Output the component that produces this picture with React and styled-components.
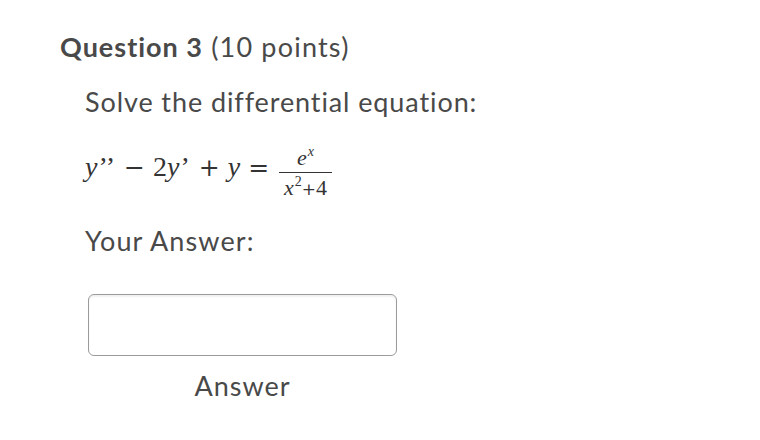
import React from "react";
import styled, { createGlobalStyle } from "styled-components";

const GlobalStyle = createGlobalStyle`
  body {
    margin: 0;
    background: #ffffff;
    font-family: Lato, "Liberation Sans", sans-serif;
    font-variant-ligatures: none;
    color: #494949;
  }
`;

const Page = styled.div`
  width: 760px;
  height: 440px;
  padding: 29px 0 0 60px;
  box-sizing: border-box;
`;

const Title = styled.h2`
  margin: 0;
  font-size: 27px;
  font-weight: 400;
  line-height: 36px;
  letter-spacing: 1.2px;
  color: #494949;

  b {
    font-weight: 700;
    letter-spacing: 1px;
  }
`;

const Body = styled.div`
  padding-left: 25px;
`;

const Prompt = styled.p`
  margin: 19px 0 0;
  font-size: 27px;
  line-height: 36px;
  letter-spacing: 0.9px;
`;

const Equation = styled.div`
  display: flex;
  align-items: baseline;
  margin-top: 16px;
  height: 58px;
  padding-top: 2px;
  box-sizing: border-box;
  font-family: "Liberation Serif", serif;
  font-size: 28px;
  line-height: 58px;
  color: #333;
`;

const MathItalic = styled.i`
  font-style: italic;
`;

const Prime = styled.span`
  margin: 0 ${(p) => p.gap ?? 1}px;
`;

const Op = styled.span`
  font-family: "DejaVu Serif", "DejaVu Sans", serif;
  font-weight: 400;
  font-size: 25px;
  margin: 0 ${(p) => p.gap ?? 8}px;
`;

const Fraction = styled.span`
  display: inline-flex;
  flex-direction: column;
  align-items: center;
  align-self: center;
  margin: 14px 0 0 2px;
  font-size: 22px;
  line-height: 21px;
`;

const Numer = styled.span`
  padding: 0 10px 4px;
  border-bottom: 1px solid #333;
  width: 100%;
  box-sizing: border-box;
  text-align: center;
`;

const Denom = styled.span`
  padding: 4px 5px 0;
`;

const Small = styled.span`
  font-family: "DejaVu Serif", "DejaVu Sans", serif;
  font-size: 17px;
`;

const Sup = styled.sup`
  font-size: 14px;
  line-height: 0;
  margin-left: 1px;
`;

const Label = styled.p`
  margin: 29px 0 0;
  font-size: 27px;
  line-height: 36px;
  letter-spacing: 1.1px;
`;

const AnswerWrap = styled.div`
  display: flex;
  flex-direction: column;
  align-items: center;
  width: 309px;
  margin: 35px 0 0 3px;
`;

const AnswerBox = styled.div`
  width: 100%;
  height: 62px;
  box-sizing: border-box;
  border: 1px solid #9b9b9b;
  border-radius: 6px;
  box-shadow: inset 0 2px 2px rgba(0, 0, 0, 0.06);
  background: #fff;
`;

const AnswerCaption = styled.div`
  margin-top: 13px;
  font-size: 27px;
  line-height: 34px;
  letter-spacing: 1px;
`;

export default function App() {
  return (
    <>
      <GlobalStyle />
      <Page>
        <Title>
          <b>Question 3</b> (10 points)
        </Title>
        <Body>
          <Prompt>Solve the differential equation:</Prompt>
          <Equation>
            <MathItalic>y</MathItalic>
            <Prime>’’</Prime>
            <Op>−</Op>
            <span>2</span>
            <MathItalic>y</MathItalic>
            <Prime>’</Prime>
            <Op>+</Op>
            <MathItalic>y</MathItalic>
            <Op>=</Op>
            <Fraction>
              <Numer>
                <i>e</i>
                <Sup>
                  <i>x</i>
                </Sup>
              </Numer>
              <Denom>
                <i>x</i>
                <Sup>2</Sup>
                <Small>+</Small>4
              </Denom>
            </Fraction>
          </Equation>
          <Label>Your Answer:</Label>
          <AnswerWrap>
            <AnswerBox />
            <AnswerCaption>Answer</AnswerCaption>
          </AnswerWrap>
        </Body>
      </Page>
    </>
  );
}
